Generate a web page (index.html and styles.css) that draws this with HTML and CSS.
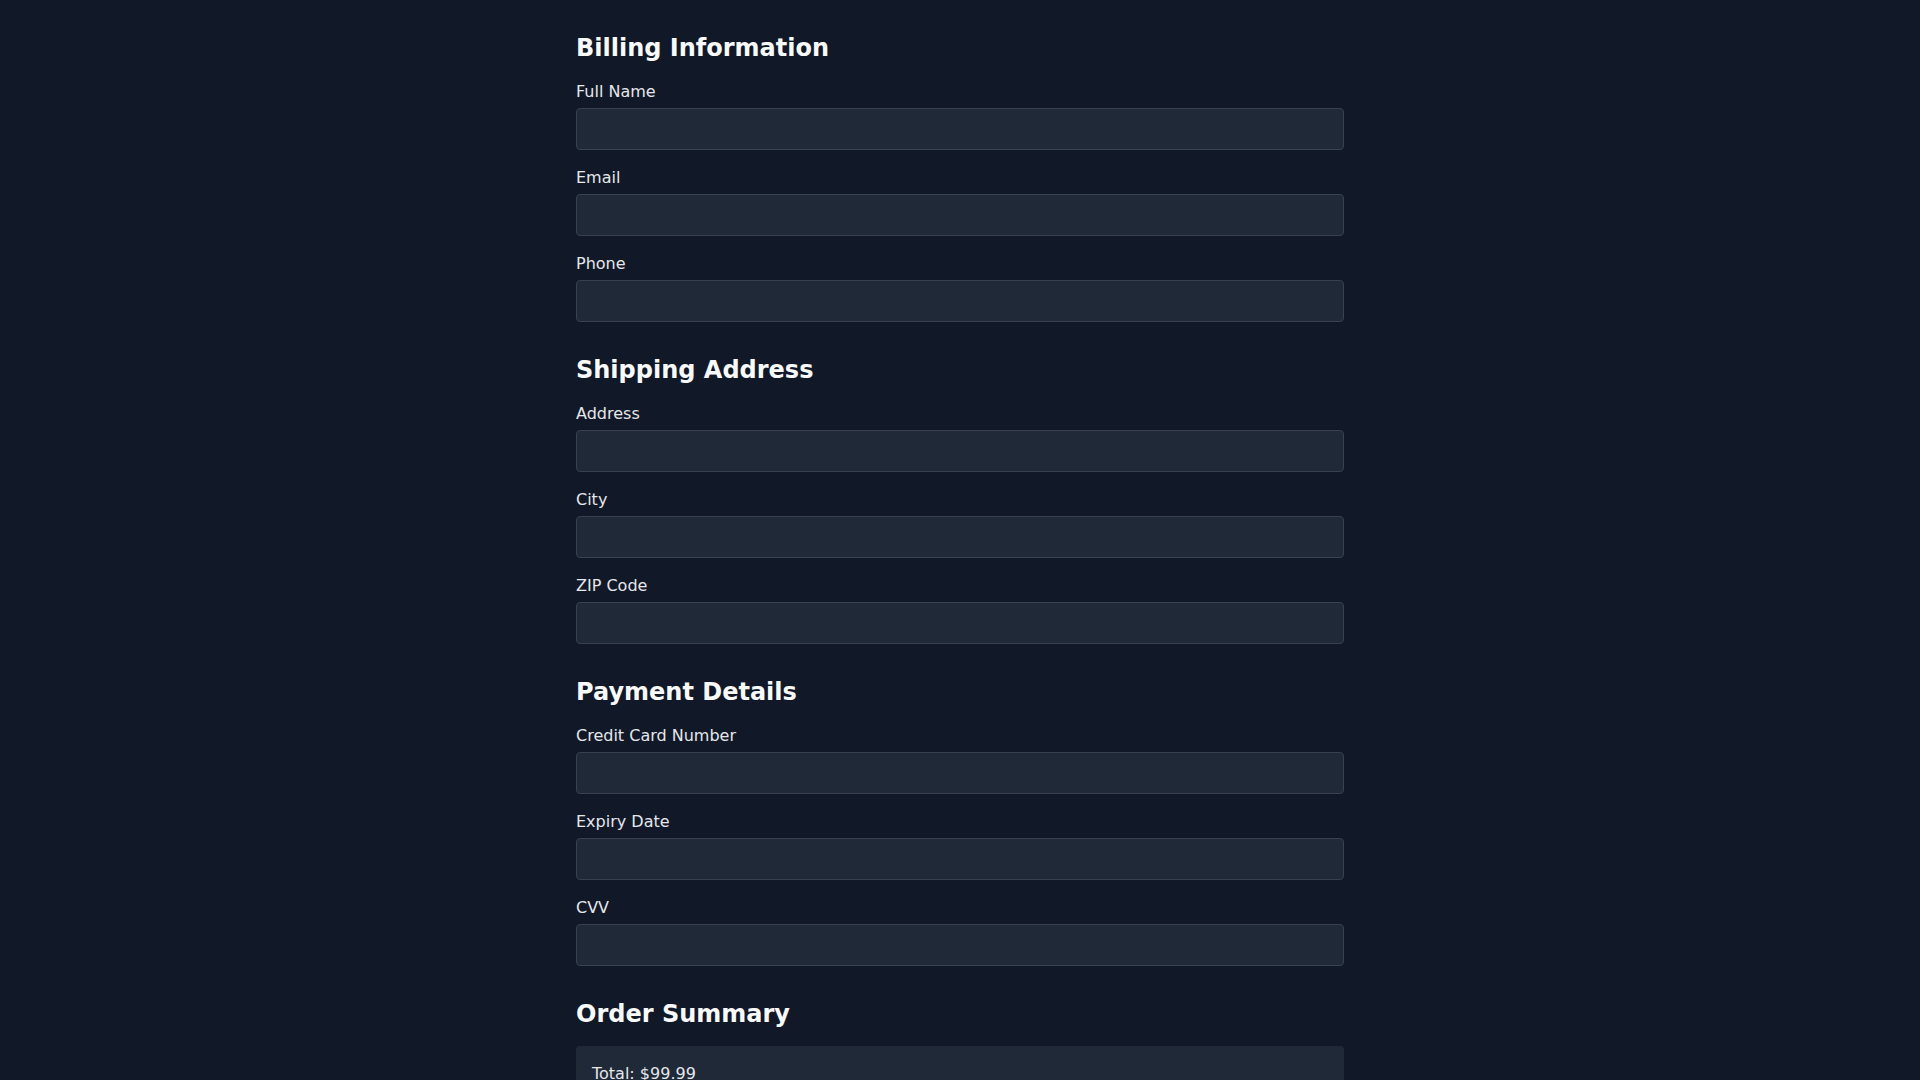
FILE: index.html
```html
<!DOCTYPE html>
<html lang="en">
<head>
<meta charset="utf-8">
<title>Checkout</title>
<link rel="stylesheet" href="styles.css">
</head>
<body>
<main class="checkout">
  <section class="section">
    <h2 class="section-title">Billing Information</h2>
    <div class="field"><label class="label">Full Name</label><input class="input" type="text"></div>
    <div class="field"><label class="label">Email</label><input class="input" type="email"></div>
    <div class="field"><label class="label">Phone</label><input class="input" type="tel"></div>
  </section>
  <section class="section">
    <h2 class="section-title">Shipping Address</h2>
    <div class="field"><label class="label">Address</label><input class="input" type="text"></div>
    <div class="field"><label class="label">City</label><input class="input" type="text"></div>
    <div class="field"><label class="label">ZIP Code</label><input class="input" type="text"></div>
  </section>
  <section class="section">
    <h2 class="section-title">Payment Details</h2>
    <div class="field"><label class="label">Credit Card Number</label><input class="input" type="text"></div>
    <div class="field"><label class="label">Expiry Date</label><input class="input" type="text"></div>
    <div class="field"><label class="label">CVV</label><input class="input" type="text"></div>
  </section>
  <section class="section">
    <h2 class="section-title">Order Summary</h2>
    <div class="summary">
      <p class="summary-line">Total: $99.99</p>
    </div>
  </section>
</main>
</body>
</html>
```
FILE: styles.css
```css
* { box-sizing: border-box; }
html, body {
  margin: 0;
  padding: 0;
  background: #111827;
  color: #e5e7eb;
  font-family: "DejaVu Sans", sans-serif;
  font-size: 16px;
  line-height: 24px;
}
.checkout {
  max-width: 768px;
  margin: 0 auto;
  padding: 32px 0;
}
.section {
  margin-bottom: 32px;
}
.section-title {
  margin: 0 0 16px;
  font-size: 24px;
  line-height: 32px;
  font-weight: 700;
  color: #f9fafb;
}
.field {
  margin-bottom: 16px;
}
.label {
  display: block;
  margin-bottom: 4px;
  font-size: 16px;
  line-height: 24px;
  color: #e5e7eb;
}
.input {
  display: block;
  width: 100%;
  height: 42px;
  padding: 8px 12px;
  background: #1f2937;
  border: 1px solid #374151;
  border-radius: 4px;
  color: #f9fafb;
  font: inherit;
  outline: none;
}
.summary {
  background: #1f2937;
  border-radius: 4px;
  padding: 16px;
}
.summary-line {
  margin: 0;
  color: #e5e7eb;
}
```
